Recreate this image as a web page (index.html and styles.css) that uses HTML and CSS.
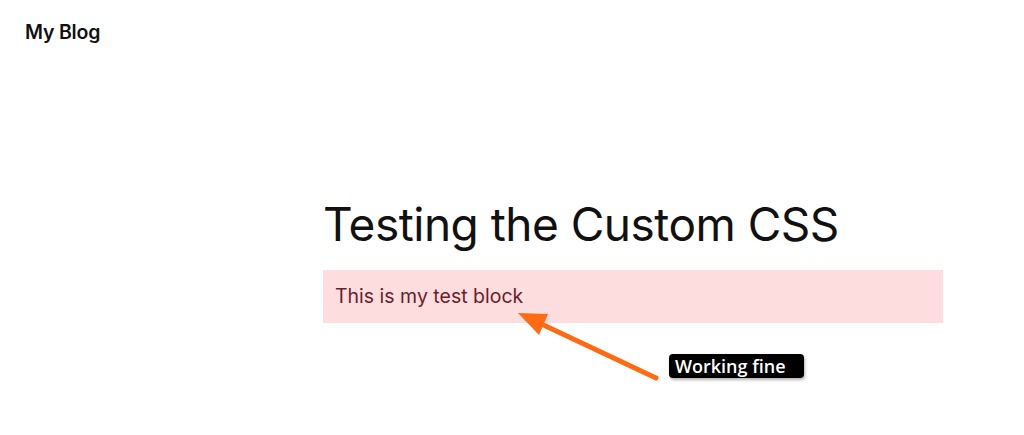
FILE: index.html
```html
<!DOCTYPE html>
<html>
<head>
<meta charset="utf-8">
<link rel="stylesheet" href="styles.css">
</head>
<body>
<header class="site-header">
  <div class="site-title">My Blog</div>
</header>
<main class="content">
  <h1 class="post-title">Testing the Custom CSS</h1>
  <div class="test-block">This is my test block</div>
</main>
<svg class="annot-arrow" width="1024" height="435" viewBox="0 0 1024 435">
  <line x1="656" y1="378" x2="535" y2="321" stroke="#ff6b12" stroke-width="5" stroke-linecap="round"/>
  <polygon points="518,313 548,314 539,335" fill="#ff6b12"/>
</svg>
<div class="annot-label">Working fine</div>
</body>
</html>
```
FILE: styles.css
```css
html, body {
  margin: 0;
  padding: 0;
  background: #ffffff;
}
body {
  font-family: Inter, "Noto Sans", sans-serif;
  color: #111111;
  width: 1024px;
  height: 435px;
  position: relative;
  overflow: hidden;
}
.site-header {
  padding: 20px 25px 0;
}
.site-title {
  font-size: 19.5px;
  font-weight: 600;
  letter-spacing: -0.2px;
  line-height: 24px;
}
.content {
  margin-left: 323px;
  width: 620px;
  padding-top: 152px;
}
.post-title {
  margin: 0;
  font-size: 46px;
  font-weight: 400;
  line-height: 56px;
  letter-spacing: -0.5px;
  color: #111111;
}
.test-block {
  margin-top: 18px;
  height: 53px;
  box-sizing: border-box;
  padding: 14px 12px 0;
  background: #fddddd;
  color: #6b1d2b;
  font-size: 19.5px;
  line-height: 24px;
}
.annot-arrow {
  position: absolute;
  left: 0;
  top: 0;
  pointer-events: none;
}
.annot-label {
  position: absolute;
  left: 669px;
  top: 354px;
  width: 135px;
  height: 24px;
  box-sizing: border-box;
  padding-left: 6px;
  background: #000000;
  border-radius: 4px;
  box-shadow: 1px 2px 3px rgba(0,0,0,0.3);
  color: #ffffff;
  font-family: "Open Sans", sans-serif;
  font-weight: 600;
  font-size: 18px;
  line-height: 24px;
}
```
